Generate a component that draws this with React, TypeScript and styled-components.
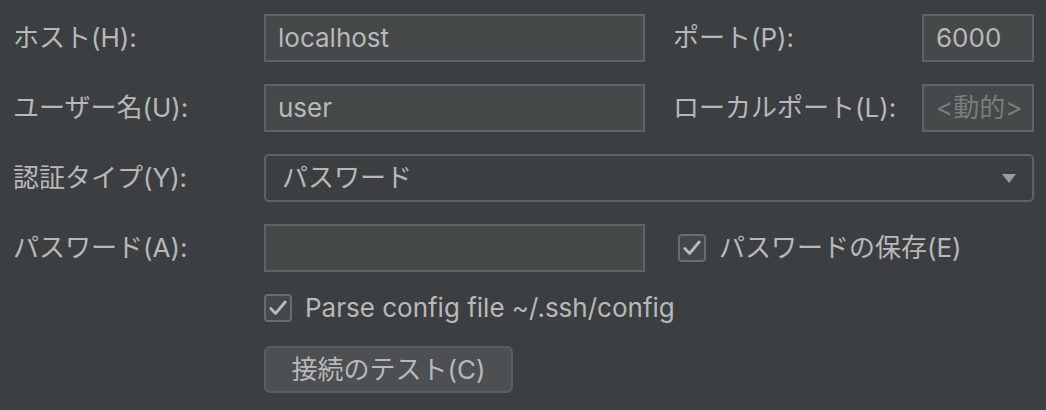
import React from 'react';
import styled, { createGlobalStyle } from 'styled-components';

const GlobalStyle = createGlobalStyle`
  html, body {
    margin: 0;
    padding: 0;
    background: #3c3f41;
  }
  body {
    font-family: Inter, "Noto Sans CJK JP", sans-serif;
    color: #bbbbbb;
    line-height: 1.2;
  }
`;

const Form = styled.div`
  width: 1046px;
  height: 410px;
  box-sizing: border-box;
  padding: 14px 12px 0 13px;
  display: grid;
  grid-template-columns: 251px 381px 277px 112px;
  grid-template-rows: 48px 48px 48px 48px 28px 47px;
  row-gap: 22px;
  align-items: center;
`;

const Label = styled.label<{ $indent?: boolean }>`
  font-size: 26px;
  color: #b8b8b8;
  padding-left: ${({ $indent }) => ($indent ? '28px' : '0')};
  white-space: nowrap;
`;

const TextField = styled.div<{ $placeholder?: boolean }>`
  height: 48px;
  box-sizing: border-box;
  border: 2px solid #606363;
  background: #45494a;
  padding: 0 ${({ $placeholder }) => ($placeholder ? '8px' : '12px')} 0 12px;
  display: flex;
  align-items: center;
  font-size: 26px;
  white-space: nowrap;
  overflow: hidden;
  color: ${({ $placeholder }) => ($placeholder ? '#7a7d7e' : '#b8b8b8')};
`;

const Select = styled.div`
  grid-column: 2 / 5;
  height: 48px;
  box-sizing: border-box;
  border: 2px solid #5f6262;
  border-radius: 5px;
  background: #3c3f41;
  padding: 0 16px 0 16px;
  display: flex;
  align-items: center;
  justify-content: space-between;
  font-size: 26px;
  color: #b8b8b8;
`;

const Arrow = styled.span`
  width: 0;
  height: 0;
  border-left: 7px solid transparent;
  border-right: 7px solid transparent;
  border-top: 9px solid #9a9c9d;
`;

const CheckRow = styled.div<{ $span?: string; $indent?: number }>`
  grid-column: ${({ $span }) => $span || 'auto'};
  display: flex;
  align-items: center;
  gap: 13px;
  padding-left: ${({ $indent }) => $indent || 0}px;
  font-size: 26px;
  color: #b8b8b8;
  white-space: nowrap;
`;

const Box = styled.span`
  width: 28px;
  height: 28px;
  flex: none;
  box-sizing: border-box;
  border: 2px solid #6a6d6e;
  border-radius: 4px;
  background: #43494a;
  display: flex;
  align-items: center;
  justify-content: center;
`;

const ButtonRow = styled.div`
  grid-column: 2 / 5;
  margin-top: 4px;
`;

const Button = styled.button`
  width: 249px;
  height: 47px;
  box-sizing: border-box;
  border: 2px solid #5b5e5f;
  border-radius: 6px;
  background: #4c5052;
  color: #b8b8b8;
  font-family: inherit;
  font-size: 26px;
  line-height: 1.2;
  padding: 0;
  cursor: pointer;
`;

const Check = () => (
  <Box>
    <svg width="18" height="16" viewBox="0 0 18 16">
      <path d="M1.8 8.6 L6.6 13.4 L16.2 2" fill="none" stroke="#bbbbbb" strokeWidth="2.8" strokeLinecap="round" strokeLinejoin="round" />
    </svg>
  </Box>
);

export default function App() {
  return (
    <>
      <GlobalStyle />
      <Form>
        <Label>ホスト(H):</Label>
        <TextField>localhost</TextField>
        <Label $indent>ポート(P):</Label>
        <TextField>6000</TextField>

        <Label>ユーザー名(U):</Label>
        <TextField>user</TextField>
        <Label $indent>ローカルポート(L):</Label>
        <TextField $placeholder>&lt;動的&gt;</TextField>

        <Label>認証タイプ(Y):</Label>
        <Select>
          パスワード
          <Arrow />
        </Select>

        <Label>パスワード(A):</Label>
        <TextField />
        <CheckRow $span="3 / 5" $indent={33}>
          <Check />
          パスワードの保存(E)
        </CheckRow>

        <CheckRow $span="2 / 5">
          <Check />
          Parse config file ~/.ssh/config
        </CheckRow>

        <ButtonRow>
          <Button>接続のテスト(C)</Button>
        </ButtonRow>
      </Form>
    </>
  );
}
